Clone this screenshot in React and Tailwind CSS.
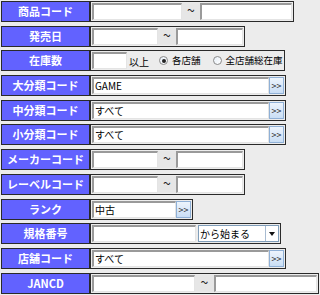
import React from "react";

const font = { fontFamily: '"Noto Sans CJK JP", "Liberation Sans", sans-serif' };

function Label({ children }) {
    return (
        <div className="w-[89px] h-full shrink-0 flex items-center justify-center bg-[#6262ff] border border-[#2a2a2a] text-white text-[11px] font-semibold leading-none">
            {children}
        </div>
    );
}

function Input({ className = "", children }) {
    return (
        <div
            className={
                "h-[17px] bg-white border-t-2 border-l-2 border-r border-b border-t-[#9a9a9a] border-l-[#9a9a9a] border-r-[#e4e4e4] border-b-[#e4e4e4] flex items-center pl-[1px] text-[10px] leading-none text-black overflow-hidden whitespace-nowrap " +
                className
            }
        >
            {children}
        </div>
    );
}

function Tilde({ className = "" }) {
    return (
        <div className={"h-[17px] flex items-center justify-center text-[14px] text-[#222] bg-[#e6e6e6] leading-none " + className}>
            <span className="-mt-[3px]">~</span>
        </div>
    );
}

function More() {
    return (
        <div className="w-[15px] h-[17px] shrink-0 flex items-center justify-center bg-gradient-to-b from-[#edf4fc] to-[#c9def5] border border-[#8fb0d6] text-[9px] text-[#222] leading-none">
            &gt;&gt;
        </div>
    );
}

function Box({ w, children, className = "" }) {
    return (
        <div className={"h-full border border-[#2a2a2a] flex items-center px-[1px] " + className} style={{ width: w }}>
            {children}
        </div>
    );
}

function Radio({ checked }) {
    return (
        <span className="w-[9px] h-[9px] rounded-full border border-[#8a8a8a] bg-gradient-to-br from-[#e6eef7] to-[#ffffff] flex items-center justify-center shrink-0">
            {checked && <span className="w-[4px] h-[4px] rounded-full bg-[#222]" />}
        </span>
    );
}

function Row({ label, children }) {
    return (
        <div className="flex h-[21px]">
            <Label>{label}</Label>
            {children}
        </div>
    );
}

export default function App() {
    return (
        <div className="w-[320px] h-[295px] bg-[#ececec] pt-[1px] pl-[1px] flex flex-col gap-[3.7px] overflow-hidden" style={font}>
            <Row label="商品コード">
                <Box w={204}>
                    <Input className="w-[90px]" />
                    <Tilde className="w-[18px]" />
                    <Input className="flex-1" />
                </Box>
            </Row>

            <Row label="発売日">
                <Box w={155}>
                    <Input className="w-[66px]" />
                    <Tilde className="w-[18px]" />
                    <Input className="flex-1" />
                </Box>
            </Row>

            <Row label="在庫数">
                <Box w={195}>
                    <Input className="w-[35px]" />
                    <span className="ml-[2px] text-[10px] text-black leading-none pt-[2px]">以上</span>
                    <span className="ml-[10px] flex items-center gap-[4px] text-[9.5px] text-black leading-none">
                        <Radio checked />
                        各店舗
                    </span>
                    <span className="ml-[12px] flex items-center gap-[4px] text-[9.5px] text-black leading-none">
                        <Radio />
                        全店舗総在庫
                    </span>
                </Box>
            </Row>

            <Row label="大分類コード">
                <Box w={196}>
                    <Input className="flex-1">GAME</Input>
                    <More />
                </Box>
            </Row>

            <Row label="中分類コード">
                <Box w={196}>
                    <Input className="flex-1">すべて</Input>
                    <More />
                </Box>
            </Row>

            <Row label="小分類コード">
                <Box w={196}>
                    <Input className="flex-1">すべて</Input>
                    <More />
                </Box>
            </Row>

            <Row label="メーカーコード">
                <Box w={155}>
                    <Input className="w-[66px]" />
                    <Tilde className="w-[18px]" />
                    <Input className="flex-1" />
                </Box>
            </Row>

            <Row label="レーベルコード">
                <Box w={155}>
                    <Input className="w-[66px]" />
                    <Tilde className="w-[18px]" />
                    <Input className="flex-1" />
                </Box>
            </Row>

            <Row label="ランク">
                <Box w={103}>
                    <Input className="flex-1">中古</Input>
                    <More />
                </Box>
            </Row>

            <Row label="規格番号">
                <Box w={191}>
                    <Input className="w-[104px]" />
                    <div className="ml-[2px] w-[81px] h-[17px] bg-white border border-[#7f9db9] flex items-center">
                        <span className="flex-1 pl-[1px] text-[10px] text-black leading-none">から始まる</span>
                        <span className="w-[13px] h-full border-l border-[#a8bcd2] flex items-center justify-center">
                            <span className="w-0 h-0 border-l-[3.5px] border-r-[3.5px] border-t-[4px] border-l-transparent border-r-transparent border-t-[#111]" />
                        </span>
                    </div>
                </Box>
            </Row>

            <Row label="店舗コード">
                <Box w={196}>
                    <Input className="flex-1">すべて</Input>
                    <More />
                </Box>
            </Row>

            <Row label="JANCD">
                <Box w={229}>
                    <Input className="w-[103px]" />
                    <Tilde className="w-[19px]" />
                    <Input className="flex-1" />
                </Box>
            </Row>
        </div>
    );
}
